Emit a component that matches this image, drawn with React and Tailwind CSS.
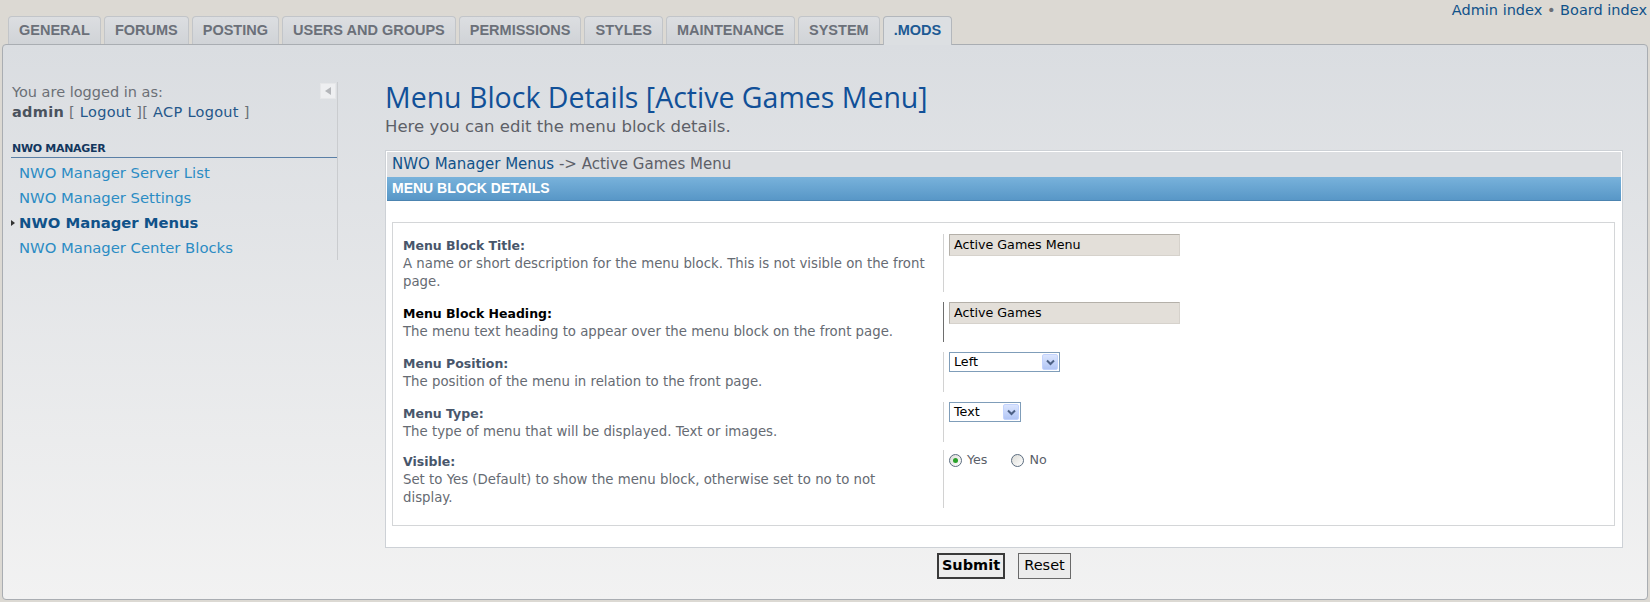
import React from 'react';

const tabs = ['GENERAL', 'FORUMS', 'POSTING', 'USERS AND GROUPS', 'PERMISSIONS', 'STYLES', 'MAINTENANCE', 'SYSTEM', '.MODS'];

const menuLinks = [
    { label: 'NWO Manager Server List' },
    { label: 'NWO Manager Settings' },
    { label: 'NWO Manager Menus', active: true },
    { label: 'NWO Manager Center Blocks' },
];

function TextInput({ value }) {
    return (
        <div className="flex h-[22px] w-[231px] items-center border border-[#b4b0a9] border-b-[#d6d2cc] border-r-[#d6d2cc] bg-[#e3dfd9] px-[4px] text-[12.7px] text-black">
            {value}
        </div>
    );
}

function SelectBox({ value, width }) {
    return (
        <div className={`flex h-[20px] items-center justify-between border border-[#7f9db9] bg-white pl-[4px] pr-[1px] text-[12.7px] text-black ${width}`}>
            <span>{value}</span>
            <span className="flex h-[16px] w-[16px] items-center justify-center rounded-[2px] border border-[#c3d3fd] bg-gradient-to-b from-[#dbe5fe] to-[#b2c6f5]">
                <svg width="9" height="7" viewBox="0 0 9 7">
                    <path d="M1 1.5 L4.5 5 L8 1.5" fill="none" stroke="#4d6185" strokeWidth="2" />
                </svg>
            </span>
        </div>
    );
}

function Radio({ checked }) {
    return (
        <span className="flex h-[13px] w-[13px] items-center justify-center rounded-full border border-[#5c6d80] bg-gradient-to-br from-[#dcdcd7] to-white">
            {checked && <span className="h-[5px] w-[5px] rounded-full bg-[#2aa22a]" />}
        </span>
    );
}

// desc lines are split where the original page wraps them
const rows = [
    {
        label: 'Menu Block Title:',
        desc: ['A name or short description for the menu block. This is not visible on the front', 'page.'],
        field: <TextInput value="Active Games Menu" />,
    },
    {
        label: 'Menu Block Heading:',
        desc: ['The menu text heading to appear over the menu block on the front page.'],
        field: <TextInput value="Active Games" />,
        hover: true,
    },
    {
        label: 'Menu Position:',
        desc: ['The position of the menu in relation to the front page.'],
        field: <SelectBox value="Left" width="w-[111px]" />,
    },
    {
        label: 'Menu Type:',
        desc: ['The type of menu that will be displayed. Text or images.'],
        field: <SelectBox value="Text" width="w-[72px]" />,
    },
    {
        label: 'Visible:',
        desc: ['Set to Yes (Default) to show the menu block, otherwise set to no to not', 'display.'],
        field: (
            <div className="flex h-[20px] items-center text-[12.7px] text-[#5a6069]">
                <Radio checked />
                <span className="ml-[5px]">Yes</span>
                <span className="ml-[24px]"><Radio /></span>
                <span className="ml-[5px]">No</span>
            </div>
        ),
    },
];

export default function App() {
    return (
        <div className="h-[602px] w-[1650px] overflow-hidden bg-[#dcd9d3] font-['DejaVu_Sans',sans-serif]">
            {/* Top strip: tabs + quick links */}
            <div className="relative z-10 flex h-[44px] items-end justify-between">
                <div className="flex items-end gap-[3px] pl-[8px]">
                    {tabs.map((tab) => {
                        const active = tab === '.MODS';
                        return (
                            <div
                                key={tab}
                                className={
                                    active
                                        ? "mb-[-1px] flex h-[29px] items-center rounded-t-[4px] border border-b-0 border-[#b3b7bc] bg-[#dcdfe2] px-[10px] font-['Liberation_Sans',sans-serif] text-[14.5px] font-bold text-[#1d5a94]"
                                        : "flex h-[28px] items-center rounded-t-[4px] border border-b-0 border-[#c2c5c9] bg-gradient-to-b from-[#dcdee1] to-[#d0d3d7] px-[10px] font-['Liberation_Sans',sans-serif] text-[14.5px] font-bold text-[#6b7079]"
                                }
                            >
                                {tab}
                            </div>
                        );
                    })}
                </div>
                <div className="self-start pr-[3px] pt-[1px] text-[14.5px] leading-[18px] text-[#105289]">
                    Admin index <span className="text-[#6b6f76]">•</span> Board index
                </div>
            </div>

            {/* Main panel */}
            <div className="ml-[2px] flex h-[556px] w-[1646px] rounded-[4px] border border-[#a9adb2] bg-gradient-to-b from-[#dadde1] to-[#f2f2f2]">
                {/* Sidebar */}
                <div className="relative mt-[37px] w-[335px] shrink-0 self-start border-r border-[#cacccf] pl-[8px]">
                    <div className="absolute right-[1px] top-[1px] flex h-[16px] w-[16px] items-center justify-center border border-[#e6e7e9] bg-[#eeeff1]">
                        <svg width="7" height="8" viewBox="0 0 7 8">
                            <path d="M6 0 L0 4 L6 8 Z" fill="#b4b6ba" />
                        </svg>
                    </div>
                    <div className="pl-[1px] text-[14.5px] leading-[20px] text-[#6b6f76]">
                        <div>You are logged in as:</div>
                        <div className="tracking-[0.3px]">
                            <span className="font-bold text-[#4a525d]">admin</span> [&nbsp;<span className="text-[#24578a]">Logout</span>&nbsp;][&nbsp;<span className="text-[#24578a]">ACP Logout</span>&nbsp;]
                        </div>
                    </div>
                    <div className="mt-[19px] border-b border-[#5a7fa6] pl-[1px] text-[11px] font-bold leading-[16px] tracking-[-0.3px] text-[#13375e]">
                        NWO MANAGER
                    </div>
                    <ul className="mt-[2px] pl-[8px]">
                        {menuLinks.map((link) => (
                            <li
                                key={link.label}
                                className={`relative text-[14.8px] leading-[25px] ${link.active ? 'font-bold text-[#105289]' : 'text-[#2b8cc4]'}`}
                            >
                                {link.active && (
                                    <svg className="absolute left-[-8px] top-[10px]" width="4" height="6" viewBox="0 0 4 6">
                                        <path d="M0 0 L4 3 L0 6 Z" fill="#333" />
                                    </svg>
                                )}
                                {link.label}
                            </li>
                        ))}
                    </ul>
                </div>

                {/* Content */}
                <div className="flex-1 pl-[47px] pr-[24px] pt-[36px]">
                    <h1 className="h-[33px] font-['Open_Sans',sans-serif] text-[28.5px] leading-[33px] text-[#115098]">
                        Menu Block Details [Active Games Menu]
                    </h1>
                    <p className="mt-[3px] text-[16.5px] leading-[20px] text-[#5d6068]">Here you can edit the menu block details.</p>

                    <div className="mt-[13px] border border-[#cdd1d6] bg-white p-[1px]">
                        <div className="flex h-[25px] items-center bg-[#dcdee1] pl-[5px] text-[15px] text-[#5d6068]">
                            <span className="text-[#105289]">NWO Manager Menus</span>&nbsp;-&gt; Active Games Menu
                        </div>
                        <div className="flex h-[24px] items-center border-b border-[#4c84b0] bg-gradient-to-b from-[#78b2db] to-[#5897c7] pl-[5px] font-['Liberation_Sans',sans-serif] text-[14px] font-bold text-white">
                            MENU BLOCK DETAILS
                        </div>

                        <div className="mb-[20px] ml-[5px] mr-[6px] mt-[21px] border border-[#d4d6d8] pb-[17px] pt-[11px]">
                            {rows.map((row, i) => (
                                <div key={row.label} className={`flex ${i === 0 ? '' : i === 4 ? 'mt-[8px]' : 'mt-[10px]'}`}>
                                    <div className="w-[550px] shrink-0 pb-[1px] pl-[10px] pr-[10px] pt-[3px] leading-[18px]">
                                        <div className={`text-[12.5px] font-bold ${row.hover ? 'text-black' : 'text-[#48566b]'}`}>{row.label}</div>
                                        {row.desc.map((line) => (
                                            <div key={line} className="whitespace-nowrap text-[13.3px] text-[#666b73]">{line}</div>
                                        ))}
                                    </div>
                                    <div className={`border-l pl-[5px] ${row.hover ? 'border-[#6e6e6e]' : 'border-[#d2d2d2]'}`}>
                                        {row.field}
                                    </div>
                                </div>
                            ))}
                        </div>
                    </div>

                    <div className="mt-[5px] flex justify-center gap-[13px]">
                        <button className="h-[26px] w-[68px] border-2 border-[#3a3a3a] bg-[#ececec] text-[14.5px] font-bold text-black">
                            Submit
                        </button>
                        <button className="h-[26px] w-[53px] border border-[#6a6a6a] bg-[#ececec] text-[14.5px] text-black">
                            Reset
                        </button>
                    </div>
                </div>
            </div>
        </div>
    );
}
